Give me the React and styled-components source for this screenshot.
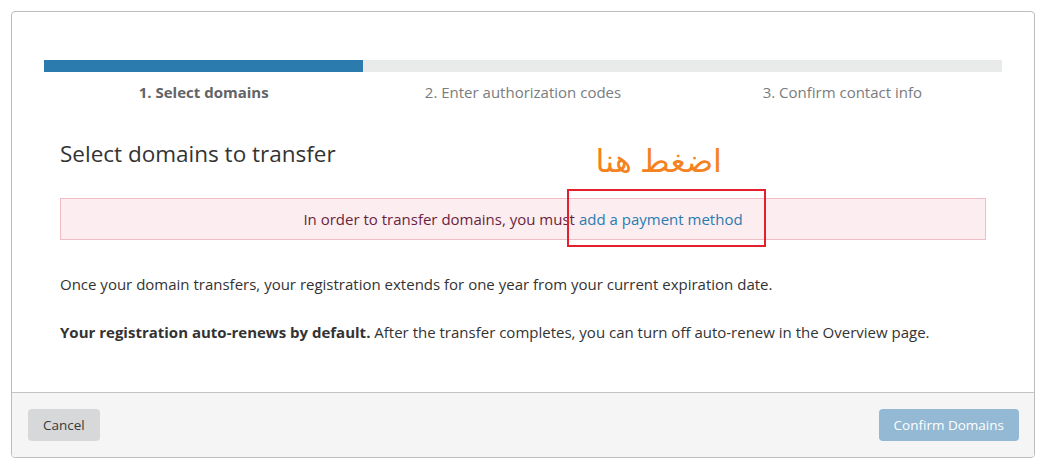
import React from "react";
import styled, { createGlobalStyle } from "styled-components";

const GlobalStyle = createGlobalStyle`
  body {
    margin: 0;
    background: #fff;
    font-family: "Open Sans", "Noto Sans", sans-serif;
    color: #333;
  }
`;

const steps = ["1. Select domains", "2. Enter authorization codes", "3. Confirm contact info"];

const Modal = styled.div`
  margin: 11px 0 0 11px;
  width: 1024px;
  height: 447px;
  box-sizing: border-box;
  border: 1px solid #bdbdbd;
  border-radius: 4px;
  display: flex;
  flex-direction: column;
  overflow: hidden;
`;

const Body = styled.div`
  flex: 1;
  padding: 48px 32px 0;
  position: relative;
`;

const Progress = styled.div`
  height: 12px;
  background: #e9eaea;
`;

const ProgressFill = styled.div`
  height: 100%;
  background: #2b7bae;
`;

const StepRow = styled.div`
  display: grid;
  grid-template-columns: repeat(3, 1fr);
  margin-top: 10px;
`;

const Step = styled.div`
  text-align: center;
  font-size: 15px;
  line-height: 20px;
  color: ${(p) => (p.$active ? "#626466" : "#7a7c7e")};
  font-weight: ${(p) => (p.$active ? 700 : 400)};
`;

const Content = styled.div`
  padding: 0 16px;
`;

const Title = styled.h2`
  margin: 37px 0 0;
  font-size: 22.5px;
  font-weight: 400;
  line-height: 30px;
  color: #333;
`;

const Alert = styled.div`
  margin-top: 29px;
  height: 42px;
  box-sizing: border-box;
  border: 1px solid #f0bcc6;
  background: #fcedf0;
  color: #6a1f3e;
  font-size: 15px;
  display: flex;
  align-items: center;
  justify-content: center;
`;

const Link = styled.a`
  color: #2b7bb0;
  text-decoration: none;
  margin-left: 4px;
`;

const Para = styled.p`
  margin: 0;
  font-size: 15px;
  line-height: 20px;
  color: #333;
  margin-top: ${(p) => p.$top}px;
`;

const Note = styled.div`
  position: absolute;
  right: 312px;
  top: 128px;
  font-size: 32px;
  line-height: 40px;
  color: #f58220;
  font-family: "Noto Sans", "DejaVu Sans", sans-serif;
  direction: rtl;
`;

const Marker = styled.div`
  position: absolute;
  left: 555px;
  top: 177px;
  width: 199px;
  height: 58px;
  box-sizing: border-box;
  border: 2px solid #e3202b;
`;

const Footer = styled.div`
  height: 65px;
  box-sizing: border-box;
  border-top: 1px solid #c4c4c4;
  background: #f5f5f5;
  padding: 0 15px 0 16px;
  display: flex;
  align-items: center;
  justify-content: space-between;
`;

const Button = styled.button`
  height: 32px;
  border: none;
  border-radius: 4px;
  padding: 0 15px;
  font-family: inherit;
  font-size: 13.5px;
  background: ${(p) => (p.$primary ? "#93b9d4" : "#d7d8d9")};
  color: ${(p) => (p.$primary ? "#fff" : "#3a3a3a")};
`;

export default function App() {
  return (
    <>
      <GlobalStyle />
      <Modal>
        <Body>
          <Progress>
            <ProgressFill style={{ width: `${100 / 3}%` }} />
          </Progress>
          <StepRow>
            {steps.map((s, i) => (
              <Step key={s} $active={i === 0}>
                {s}
              </Step>
            ))}
          </StepRow>
          <Content>
            <Title>Select domains to transfer</Title>
            <Alert>
              In order to transfer domains, you must
              <Link href="#">add a payment method</Link>
            </Alert>
            <Para $top={34}>
              Once your domain transfers, your registration extends for one year from your current expiration date.
            </Para>
            <Para $top={28}>
              <b>Your registration auto-renews by default.</b> After the transfer completes, you can turn off auto-renew in the Overview page.
            </Para>
          </Content>
          <Note>اضغط هنا</Note>
          <Marker />
        </Body>
        <Footer>
          <Button>Cancel</Button>
          <Button $primary>Confirm Domains</Button>
        </Footer>
      </Modal>
    </>
  );
}
